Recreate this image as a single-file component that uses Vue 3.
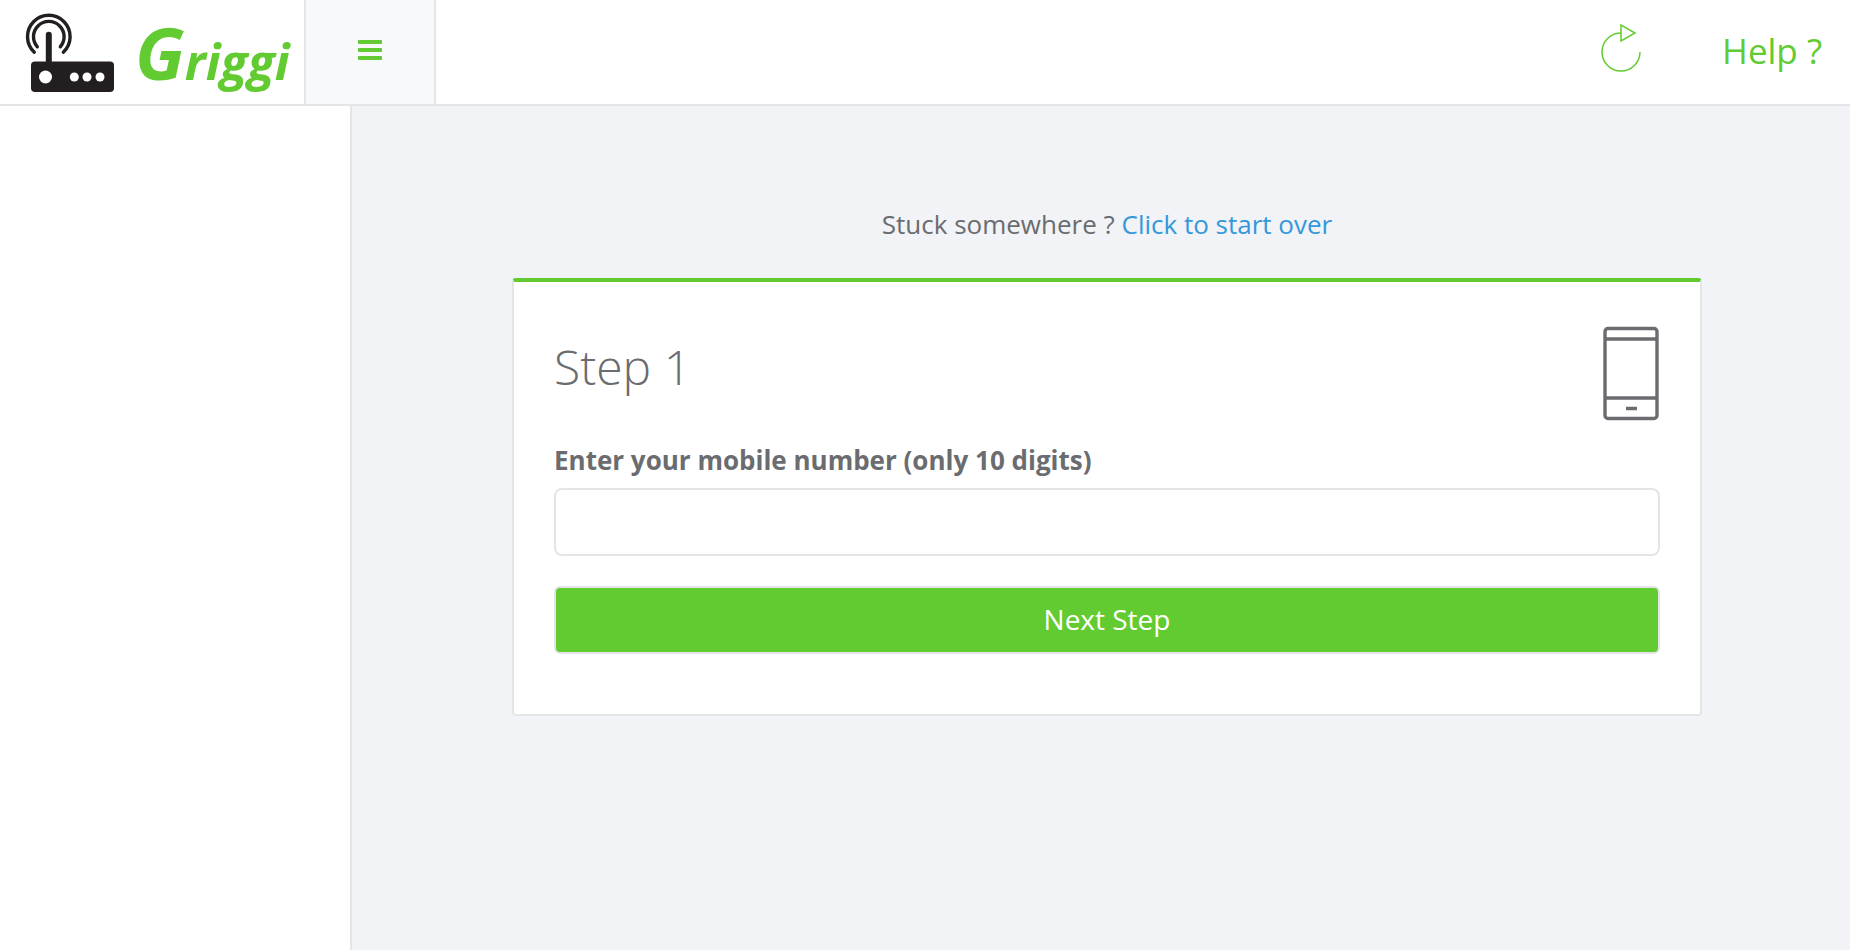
<script setup>
import { ref } from 'vue'

const mobile = ref('')
const restart = () => {
  mobile.value = ''
}
</script>

<template>
  <div class="page">
    <header class="topbar">
      <a class="brand" href="#" aria-label="Griggi home">
        <svg class="router" viewBox="0 0 90 80" aria-hidden="true">
          <g fill="none" stroke="#231f20" stroke-linecap="round">
            <path d="M9.300 40.200A21.300 21.300 0 1 1 38.300 40.200" stroke-width="3.400" />
            <path d="M12.300 34.800A15.300 15.300 0 1 1 35.300 34.800" stroke-width="3.400" />
            <path d="M23.800 22.800V52" stroke-width="6" />
          </g>
          <rect x="6" y="49.500" width="83" height="30.500" rx="4" fill="#231f20" />
          <g fill="#fff">
            <circle cx="20.500" cy="65" r="6.500" />
            <circle cx="49.300" cy="65" r="4.500" />
            <circle cx="62" cy="65" r="4.500" />
            <circle cx="75" cy="65" r="4.500" />
          </g>
        </svg>
        <span class="wordmark"><span class="initial">G</span>riggi</span>
      </a>
      <button class="toggle" type="button" aria-label="Toggle menu">
        <svg viewBox="0 0 24 20" aria-hidden="true">
          <g fill="#62cb31">
            <rect width="24" height="4" rx="1" />
            <rect y="8" width="24" height="4" rx="1" />
            <rect y="16" width="24" height="4" rx="1" />
          </g>
        </svg>
      </button>
      <nav class="actions">
        <button class="refresh" type="button" aria-label="Refresh" @click="restart">
          <svg viewBox="0 0 42 50" aria-hidden="true">
            <path
              d="M21 10A19 19 0 1 0 40 29M21 2V18L35 10Z"
              fill="none"
              stroke="#62cb31"
              stroke-width="1.500"
            />
          </svg>
        </button>
        <a class="help" href="#">Help ?</a>
      </nav>
    </header>

    <div class="body">
      <aside class="sidebar"></aside>
      <main class="content">
        <p class="stuck">Stuck somewhere ? <a href="#" @click.prevent="restart">Click to start over</a></p>
        <form class="card" @submit.prevent>
          <div class="heading">
            <h1>Step 1</h1>
            <svg class="phone" viewBox="0 0 58 96" aria-hidden="true">
              <g fill="none" stroke="#6a6c6f" stroke-width="3.400">
                <rect x="3" y="2.500" width="52" height="90" rx="3" />
                <path d="M3 13H55M3 72H55M24 82.500H35" />
              </g>
            </svg>
          </div>
          <label for="mobile">Enter your mobile number (only 10 digits)</label>
          <input id="mobile" v-model="mobile" type="tel" maxlength="10" />
          <button class="next" type="submit">Next Step</button>
        </form>
      </main>
    </div>
  </div>
</template>

<style>
body {
  margin: 0;
  background: #f1f3f6;
}
</style>

<style scoped>
.page {
  display: flex;
  flex-direction: column;
  min-height: 100vh;
  font-family: "Open Sans", "Noto Sans", sans-serif;
  font-size: 26px;
  color: #6a6c6f;
}
.page * {
  box-sizing: border-box;
}
a {
  color: #3498db;
  text-decoration: none;
}
button {
  font: inherit;
  cursor: pointer;
}
svg {
  display: block;
}
.topbar {
  display: flex;
  height: 106px;
  background: #fff;
  border-bottom: 2px solid #e4e5e7;
}
.brand {
  display: flex;
  gap: 20px;
  width: 304px;
  padding-left: 25px;
}
.router {
  flex: none;
  width: 90px;
  height: 80px;
  margin-top: 12px;
}
.wordmark {
  color: #62cb31;
  font-size: 50px;
  font-style: italic;
  font-weight: 700;
  line-height: 104px;
}
.initial {
  font-size: 72px;
}
.toggle {
  display: flex;
  align-items: center;
  justify-content: center;
  width: 132px;
  padding: 0 0 4px;
  background: #f7f9fb;
  border: solid #e4e5e7;
  border-width: 0 2px;
}
.toggle svg {
  width: 24px;
  height: 20px;
}
.actions {
  display: flex;
  align-items: center;
  gap: 80px;
  margin-left: auto;
  padding-right: 28px;
}
.refresh {
  padding: 0 0 8px;
  background: none;
  border: 0;
}
.refresh svg {
  width: 42px;
  height: 50px;
}
.help {
  padding-bottom: 4px;
  color: #62cb31;
  font-size: 35px;
  font-weight: 500;
}
.body {
  display: flex;
  flex: 1;
}
.sidebar {
  flex: none;
  width: 352px;
  background: #fff;
  border-right: 2px solid #e4e5e7;
}
.content {
  flex: 1;
  padding: 100px 148px 40px 160px;
}
.stuck {
  margin: 0 0 36px;
  line-height: 36px;
  text-align: center;
}
.card {
  padding: 44px 40px 60px;
  background: #fff;
  border: 2px solid #e4e5e7;
  border-top: 4px solid #62cb31;
  border-radius: 4px;
}
.heading {
  display: flex;
  align-items: flex-start;
  justify-content: space-between;
  margin-bottom: 20px;
}
h1 {
  margin: 0;
  font-size: 48px;
  font-weight: 300;
  line-height: 82px;
}
.phone {
  width: 58px;
  height: 96px;
}
label {
  display: block;
  margin-bottom: 10px;
  font-weight: 700;
  line-height: 36px;
}
input {
  display: block;
  width: 100%;
  height: 68px;
  margin-bottom: 30px;
  padding: 12px 24px;
  background: #fff;
  border: 2px solid #e4e5e7;
  border-radius: 8px;
  color: inherit;
  font: inherit;
}
.next {
  display: block;
  width: 100%;
  height: 68px;
  padding: 0 0 2px;
  background: #62cb31;
  border: 2px solid #e4e5e7;
  border-radius: 6px;
  color: #fff;
  font-size: 28px;
  font-weight: 500;
}
</style>
